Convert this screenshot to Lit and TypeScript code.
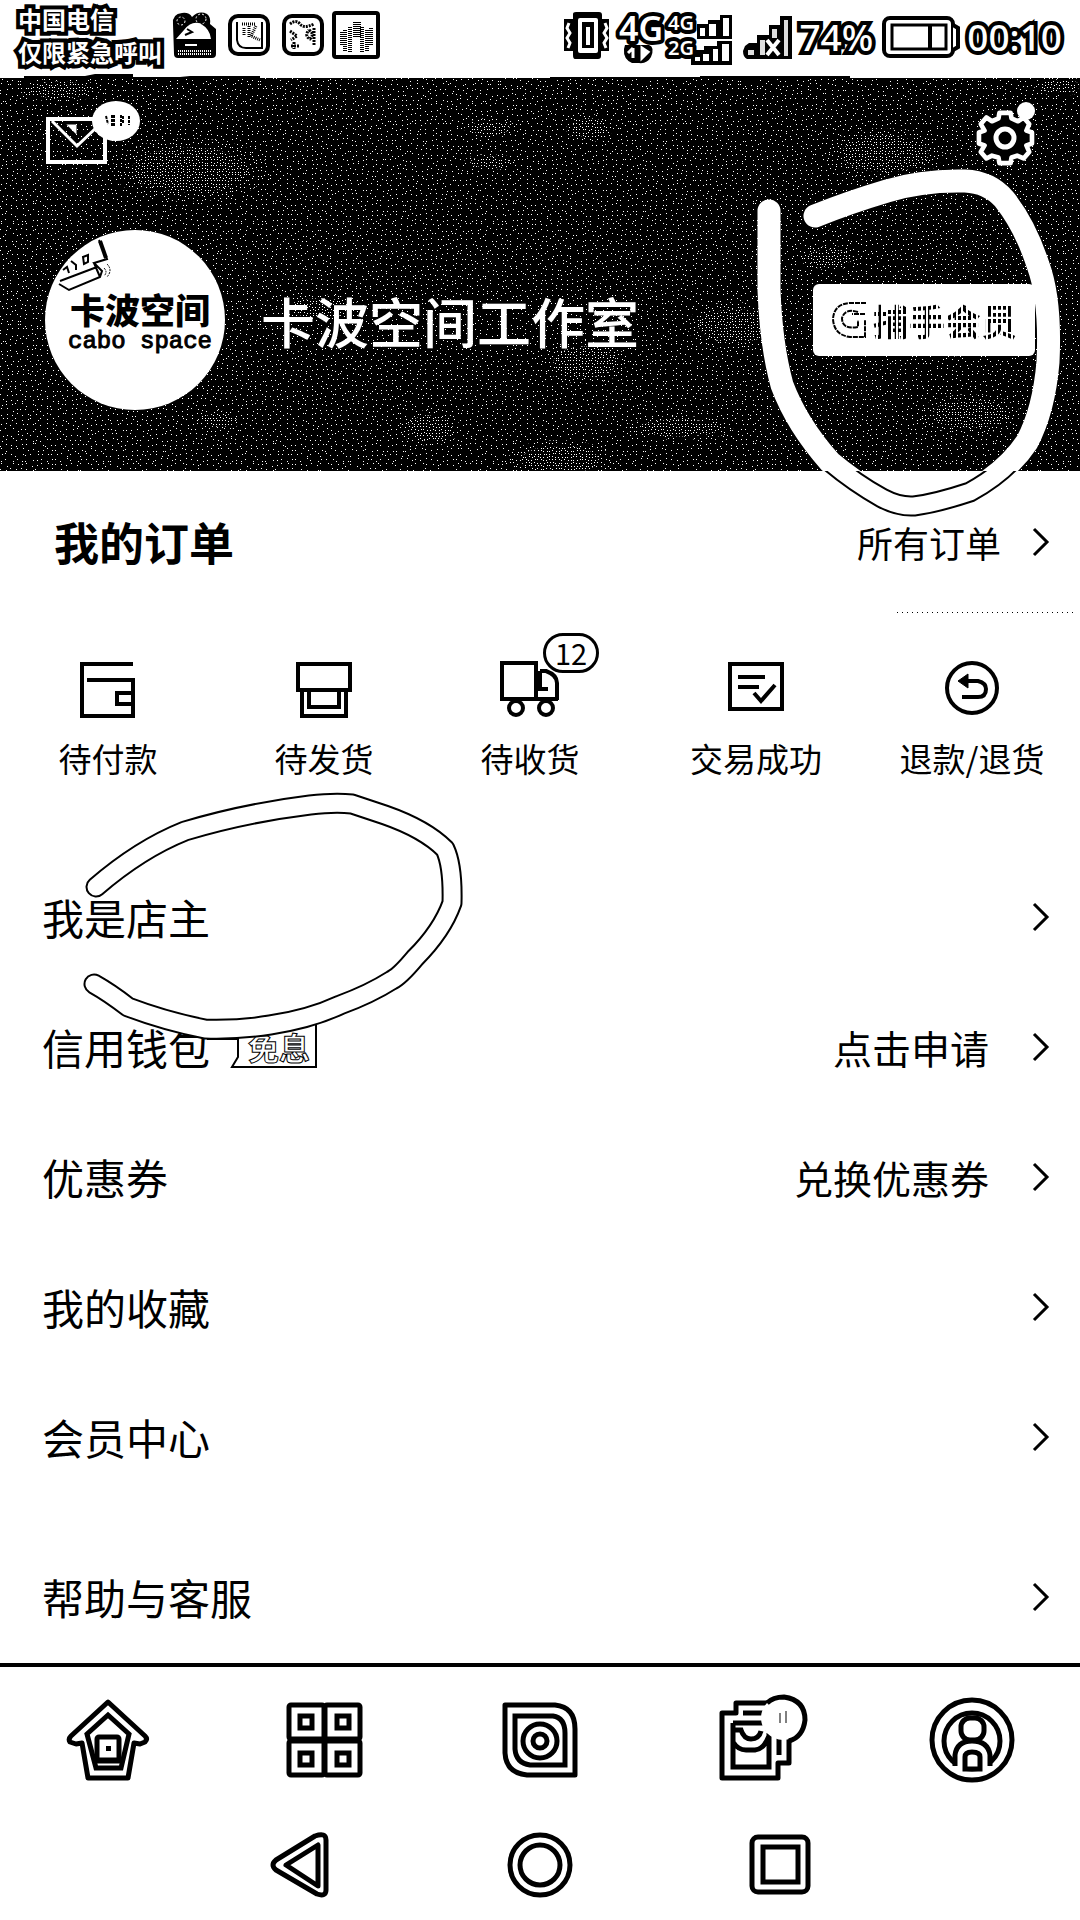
import { LitElement, html, css, svg, nothing } from "lit";
import { customElement } from "lit/decorators.js";

/* Builds a tile of single-pixel specks, one per cell, placed with a seeded generator. */
function speckles(size: number, cell: number, seed: number): string {
  let s = seed;
  const next = () => {
    s = (s * 1103515245 + 12345) % 2147483648;
    return s / 2147483648;
  };
  let d = "";
  for (let y = 0; y < size; y += cell) {
    for (let x = 0; x < size; x += cell) {
      const px = x + Math.floor(next() * (cell - 1));
      const py = y + Math.floor(next() * (cell - 1));
      d += `M${px} ${py}h1v1h-1z`;
    }
  }
  return d;
}

const BLOBS = [
  [190, 92, 78, 32], [490, 50, 26, 10], [490, 84, 26, 8], [590, 50, 24, 14], [885, 76, 58, 26],
  [735, 248, 48, 24], [585, 284, 42, 22], [430, 350, 30, 18], [560, 382, 52, 20],
  [975, 262, 52, 18], [830, 180, 30, 12], [220, 342, 22, 10], [680, 350, 54, 12],
  [970, 336, 50, 20], [1060, 8, 26, 10], [320, 230, 40, 14], [60, 12, 40, 12],
];

const chevron = html`<svg class="chev" viewBox="0 0 16 28" width="16" height="28" aria-hidden="true">
  <path d="M1 1L14 14L1 27" fill="none" stroke="#000" stroke-width="3" />
</svg>`;

const ORDERS = [
  { label: "待付款", icon: svg`<path d="M57 8H6V60H57V24H11M57 37H41V48H57" />` },
  { label: "待发货", icon: svg`<path d="M6 8H58V34H6zM10 36V60H54V36M17 36V51H47V36" />` },
  {
    label: "待收货", badge: "12",
    icon: svg`<path d="M4 7H38V43H4zM42 15H48Q59 19 59 27V44M42 15V33H50M38 43H60" /><circle cx="18" cy="52" r="7" /><circle cx="48" cy="52" r="7" />`,
  },
  { label: "交易成功", icon: svg`<path d="M6 8H58V53H6zM14 21H41M14 31H35M30 37L37 45L51 29" />` },
  {
    label: "退款/退货",
    icon: svg`<circle cx="32" cy="32" r="25" /><path d="M23 25H38Q46 27 46 33Q46 41 38 41H22" /><path d="M28 18L18 25L28 32z" fill="#000" stroke-width="1" />`,
  },
];

const ROWS = [
  { label: "我是店主" },
  { label: "信用钱包", tag: "免息", extra: "点击申请" },
  { label: "优惠券", extra: "兑换优惠券" },
  { label: "我的收藏" },
  { label: "会员中心" },
  { label: "帮助与客服", apart: true },
];

const TABS = [
  {
    label: "首页",
    icon: svg`<path d="M45 7L82 41Q85 44 82 47L77 49L71 48L65 83H25L19 48L13 49L7 47Q5 44 8 41z" stroke-linejoin="round" />
      <path d="M45 20L66 39L58 73H33L24 39z" /><rect x="34" y="42" width="22" height="23" rx="2" /><path d="M33 66H58" /><rect x="43" y="51" width="5" height="5" fill="#000" stroke="none" />`,
  },
  {
    label: "分类",
    icon: svg`<rect x="10" y="10" width="35" height="34" rx="2" /><rect x="46" y="10" width="35" height="34" rx="2" /><rect x="10" y="46" width="35" height="34" rx="2" /><rect x="46" y="46" width="35" height="34" rx="2" />
      <path d="M21 21H33V33H21zM58 21H70V33H58zM21 58H33V70H21zM58 58H70V70H58z" />`,
  },
  {
    label: "发现",
    icon: svg`<path d="M10 10H60Q80 12 80 34V80H32Q11 78 10 58z" stroke-linejoin="round" /><path d="M20 21H58Q70 23 70 38V70H35Q21 68 20 54z" /><circle cx="45" cy="46" r="17" /><circle cx="45" cy="46" r="7" />`,
  },
  {
    label: "购物袋",
    icon: svg`<g transform="translate(12 0)"><path d="M13 18V8H66V68H55V83H-1V18z" stroke-linejoin="round" /><path d="M20 18H46M56 42V60" /><path d="M10 28H45V36M46 38V72H10V28M10 35H18Q21 44 28 44Q36 44 38 36M10 47Q15 55 23 55H32Q41 54 46 41" />
      <circle cx="60" cy="23" r="22" fill="#fff" stroke="none" /><path d="M44 8Q50 2 61 2Q82 5 82 25Q80 42 66 46" /><path d="M57 18V28M63 16V28" stroke-width="1" /></g>`,
  },
  {
    label: "我的",
    icon: svg`<circle cx="45" cy="45" r="40" /><circle cx="45" cy="46" r="28" /><rect x="34" y="23" width="23" height="22" rx="9" fill="#fff" /><path d="M28 76V60Q28 46 45 46Q62 46 62 60V76z" fill="#fff" stroke="none" /><path d="M28 71V60Q30 46 45 46Q61 46 63 60V71" /><path d="M38 74V62Q38 57 45 57Q53 57 53 62V74z" />`,
  },
];

@customElement("app-root")
export class AppRoot extends LitElement {
  static styles = css`
    :host {
      display: block;
      background: #fff;
      color: #000;
      font-family: "Noto Sans CJK SC", "Noto Sans", sans-serif;
    }
    * { box-sizing: border-box; }
    svg { display: block; flex: none; overflow: visible; }
    button, a {
      font: inherit; color: inherit; background: none; border: 0; padding: 0; margin: 0;
      text-decoration: none; cursor: pointer;
    }
    .status {
      display: flex; justify-content: space-between; align-items: center;
      height: 78px; padding: 0 18px 4px;
    }
    .side { display: flex; align-items: center; gap: 8px; }
    .outlined {
      color: #fff; -webkit-text-stroke: 8px #000; paint-order: stroke fill;
      stroke-linejoin: round; font-weight: 500;
    }
    .carrier { font-size: 24px; line-height: 33px; font-weight: 700; margin-right: 2px; padding-bottom: 4px; }
    .level { font: 500 37px/40px "Noto Sans", sans-serif; }
    .net { margin: 0 3px 0 auto; }
    .net text {
      font-family: "Noto Sans", sans-serif; font-weight: 600; fill: #fff; stroke: #000;
      stroke-width: 8px; stroke-linejoin: round; paint-order: stroke fill;
    }
    .head { position: relative; background: #000; color: #fff; padding: 20px 45px 61px; }
    .texture { position: absolute; inset: 0; width: 100%; height: 100%; overflow: hidden; }
    .edge { position: absolute; left: 0; top: 0; }
    .tools { position: relative; display: flex; justify-content: space-between; margin-bottom: 62px; }
    .profile { position: relative; display: flex; align-items: center; }
    .avatar {
      width: 180px; height: 180px; border-radius: 50%; background: #fff; color: #000; overflow: hidden;
      position: relative; display: flex; flex-direction: column; align-items: center; justify-content: center;
      padding: 4px 0 0 10px;
    }
    .brush { position: absolute; left: 0; top: 0; }
    .studio { font-size: 35px; line-height: 40px; font-weight: 900; }
    .latin { font: 400 24px/26px "Liberation Mono", monospace; -webkit-text-stroke: 1px #000; }
    .name { font-size: 54px; line-height: 70px; font-weight: 500; margin: 2px auto 0 36px; }
    .member {
      display: flex; align-items: center; gap: 5px; width: 222px; height: 72px; padding-left: 19px;
      background: #fff; color: #000; border-radius: 6px;
    }
    .dots {
      font-size: 36px; line-height: 44px; font-weight: 700; color: transparent;
      background: repeating-linear-gradient(90deg, #000 0 3px, #fff 3px 5px);
      -webkit-background-clip: text; background-clip: text;
    }
    .ring { position: absolute; right: 0; top: 0; pointer-events: none; z-index: 2; }
    .ring.loop { right: auto; left: 0; top: -71px; }
    .title { display: flex; align-items: center; height: 144px; padding: 0 31px 3px 54px; }
    h2 { margin: 0 auto 0 0; font-size: 45px; line-height: 60px; font-weight: 700; }
    .all { display: flex; align-items: center; gap: 32px; font-size: 36px; line-height: 48px; }
    .rule {
      height: 1px; margin: -3px 4px 0 auto; width: 179px;
      background: repeating-linear-gradient(90deg, #000 0 1px, #fff 1px 5px);
    }
    .orders { display: grid; grid-template-columns: repeat(5, 1fr); padding: 43px 0 71px; }
    .order { display: flex; flex-direction: column; align-items: center; font-size: 33px; line-height: 46px; gap: 15px; }
    .order.shift { padding-right: 20px; }
    .glyph { position: relative; display: block; }
    .badge {
      position: absolute; left: 45px; top: -23px; width: 56px; height: 40px; border: 3px solid #000;
      border-radius: 20px; background: #fff; font-size: 29px; line-height: 32px; text-align: center;
    }
    .list { position: relative; }
    .row { display: flex; align-items: center; height: 130px; padding: 0 31px 0 42px; font-size: 42px; line-height: 56px; }
    .row.apart { margin-top: 30px; }
    .tag { margin: 2px 0 0 -3px; }
    .extra { font-size: 39px; margin-right: 44px; }
    .push { flex: 1; }
    .tabs { display: grid; grid-template-columns: repeat(5, 1fr); border-top: 4px solid #000; padding: 28px 0; margin-top: 1px; }
    .tab { display: flex; justify-content: center; }
    .keys { display: grid; grid-template-columns: repeat(3, 240px); justify-content: center; padding: 17px 0 19px; }
  `;

  private texture() {
    return html`<svg class="texture" aria-hidden="true">
      <defs>
        <pattern id="sparse" width="240" height="240" patternUnits="userSpaceOnUse"><path d=${speckles(240, 5, 7)} fill="#fff" /></pattern>
        <pattern id="mid" width="240" height="240" patternUnits="userSpaceOnUse"><rect width="240" height="240" /><path d=${speckles(240, 4, 11)} fill="#fff" /></pattern>
        <pattern id="dense" width="240" height="240" patternUnits="userSpaceOnUse"><rect width="240" height="240" /><path d=${speckles(240, 3, 19)} fill="#fff" /></pattern>
      </defs>
      <rect width="100%" height="100%" fill="url(#sparse)" shape-rendering="crispEdges" />
      ${BLOBS.map(([x, y, rx, ry]) => svg`<ellipse cx=${x} cy=${y} rx=${rx} ry=${ry} fill="url(#mid)" /><ellipse cx=${x} cy=${y} rx=${rx * 0.75} ry=${ry * 0.7} fill="url(#dense)" />`)}
    </svg>
    <svg class="edge" width="960" height="2" aria-hidden="true">
      <path d="M0 1V0H24V-2H85L95 -4H133V-1H180L190 -2H260V1zM550 1V-1H700V-2H850V0H960V1z" />
    </svg>`;
  }

  private statusBar() {
    return html`<div class="status">
      <div class="side">
        <div class="carrier outlined">中国电信<br />仅限紧急呼叫</div>
        <svg viewBox="0 0 210 50" width="210" height="50" aria-hidden="true">
          <path d="M1 12Q0 2 10 1Q17 0 20 5Q27 -2 35 2Q39 5 38 12L44 17V42Q44 46 40 46H6Q2 46 2 42z" />
          <circle cx="9" cy="9" r="4" fill="none" stroke="#fff" stroke-dasharray="2 2" /><circle cx="29" cy="7" r="5" fill="none" stroke="#fff" stroke-dasharray="2 2" />
          <path d="M4 27L12 18Q20 8 29 12Q38 17 39 27zM13 32H25V34H13z" fill="#fff" /><path d="M15 17L20 20L13 23" stroke="#000" stroke-width="2" fill="none" />
          <path d="M6 39H39M6 42H39" stroke="#fff" stroke-width="2" stroke-dasharray="1 1" />
          <rect x="58" y="4" width="38" height="38" rx="8" fill="#fff" stroke="#000" stroke-width="4" />
          <path d="M65 10V28Q66 36 74 36H90V10" fill="none" stroke="#000" stroke-width="2" /><path d="M70 12H83M72 16V24M77 14V26M84 14L79 24L88 28" stroke="#000" stroke-width="3" fill="none" stroke-dasharray="1 1" />
          <rect x="112" y="4" width="38" height="38" rx="8" fill="#fff" stroke="#000" stroke-width="4" />
          <path d="M118 12Q124 7 128 12T142 12M118 19L125 24L119 28M137 18Q143 22 138 27Q132 24 137 18M119 34H128M122 30V37M142 16V33" stroke="#000" stroke-width="3" fill="none" stroke-dasharray="2 1" />
          <rect x="162" y="1" width="44" height="44" rx="2" fill="#fff" stroke="#000" stroke-width="4" />
          <path d="M173 39V18M178 40V15M190 40V15M195 39V18M183 25V9M187 25V9M199 33V16M170 33V20" stroke="#000" stroke-width="4" stroke-dasharray="1 1" />
        </svg>
      </div>
      <svg class="net" viewBox="0 0 235 60" width="235" height="60" role="img" aria-label="4G 2G">
        <path d="M3 12H12V7Q12 5 15 5H38Q41 5 41 8V12H48V44H40V49Q40 52 37 52H14Q12 52 12 48V44H3z" />
        <rect x="17" y="11" width="20" height="35" rx="2" fill="#fff" /><rect x="21" y="15" width="12" height="26" /><rect x="25" y="20" width="4" height="18" fill="#fff" />
        <path d="M8 16L6 21L9 26L6 31L9 36L7 41M44 16L46 21L43 26L46 31L43 36L45 41" stroke="#fff" stroke-width="3" fill="none" />
        <path d="M64 38H88Q94 40 90 50Q86 57 78 56H71Q62 52 63 42z" />
        <text x="58" y="34" font-size="34">4G</text>
        <path d="M72 41V51M67 46L72 41M81 41V51L87 45z" stroke="#fff" stroke-width="3" fill="#fff" />
        <path d="M136 17H147V13H159V8H171V32H136zM130 43H143V39H156V34H171V58H130z" />
        <path d="M139 21h5v8h-5zM148 17h7v12h-7zM162 11h6v18h-6zM134 50h5v4h-5zM142 47h6v7h-6zM152 42h5v12h-5zM161 37h7v17h-7z" fill="#fff" />
        <text x="107" y="23" font-size="20">4G</text><text x="107" y="48" font-size="20">2G</text>
        <path d="M184 39L188 36H196V28H208V18H219V9H231V52H186Q182 50 182 44z" />
        <path d="M187 43h6v5h-6zM199 33h5v15h-5zM211 22h5v9h-5zM223 13h4v36h-4z" fill="#ddd" /><path d="M206 33L218 48M218 33L206 48" stroke="#fff" stroke-width="4" />
      </svg>
      <div class="side">
        <span class="level outlined">74%</span>
        <svg viewBox="0 0 78 44" width="78" height="44" aria-hidden="true">
          <rect x="3" y="3" width="69" height="38" rx="6" fill="#fff" stroke="#000" stroke-width="4" /><path d="M72 10L77 13V32L72 35" fill="#fff" stroke="#000" stroke-width="4" />
          <rect x="11" y="10" width="54" height="24" fill="#fff" stroke="#000" stroke-width="3" /><path d="M49 10V34" stroke="#000" stroke-width="4" />
        </svg>
        <span class="level outlined">00:10</span>
      </div>
    </div>`;
  }

  private header() {
    const ring = "M27 111V190Q29 245 40 285Q55 325 88 362Q113 383 140 398Q157 407 172 406Q195 403 228 392Q265 372 285 342Q302 310 306 262Q309 200 296 165Q283 125 262 99Q247 82 223 81Q180 80 145 91Q108 102 73 116";
    return html`<header class="head">
      ${this.texture()}
      <div class="tools">
        <button aria-label="消息"><svg viewBox="45 98 96 70" width="96" height="70">
          <rect x="48" y="119" width="57" height="43" fill="none" stroke="#fff" stroke-width="4" />
          <path d="M52 121L77 146L97 127M70 126L75 131V126z" fill="none" stroke="#fff" stroke-width="3" />
          <ellipse cx="116" cy="121" rx="24" ry="20" fill="#fff" />
          <path d="M106 116L108 124M112 115V126M114 115V126M121 115V126M123 116V124M129 116V125" stroke="#000" stroke-width="2" stroke-dasharray="3 1" />
        </svg></button>
        <button aria-label="设置"><svg viewBox="975 98 60 70" width="60" height="70">
          <path d="M998 117L999 111H1011L1012 117L1019 120L1025 116L1031 123L1028 130L1034 132V144L1028 146L1031 153L1025 160L1018 157L1012 159L1011 165H999L998 159L991 157L985 160L979 153L983 146L977 144V132L983 130L979 123L985 116L991 120z" fill="#000" stroke="#fff" stroke-width="5" stroke-linejoin="round" transform="translate(1005 138) scale(.93) translate(-1005 -138)" />
          <circle cx="1005" cy="138" r="9" fill="none" stroke="#fff" stroke-width="5" /><circle cx="1026" cy="111" r="9" fill="#fff" />
        </svg></button>
      </div>
      <div class="profile">
        <div class="avatar">
          <svg class="brush" viewBox="0 0 180 180" width="180" height="180" aria-hidden="true">
            <path d="M54 10L62 29L49 33L57 41L55 47L24 60L14 54M49 33L55 47M15 51L52 37" fill="none" stroke="#000" stroke-width="2" /><path d="M55 11L61 28" stroke="#000" stroke-width="4" /><path d="M38 27L43 25V32L39 34zM26 31L31 35V40M18 40L22 37L24 43" stroke="#000" stroke-width="2" fill="none" /><path d="M62 34Q68 40 62 47M59 38Q63 42 59 46" stroke="#000" fill="none" stroke-dasharray="2 1" />
          </svg>
          <span class="studio">卡波空间</span><span class="latin">cabo space</span>
        </div>
        <div class="name">卡波空间工作室</div>
        <button class="member">
          <svg viewBox="0 0 36 40" width="36" height="40" aria-hidden="true"><path d="M34 3H18Q2 4 1 19Q2 35 18 37H33V20M33 14H20M26 12Q13 8 10 18Q10 30 26 27V20" fill="none" stroke="#000" stroke-width="2" stroke-dasharray="5 1" /></svg>
          <span class="dots">捕手会员</span>
        </button>
      </div>
      <svg class="ring" viewBox="0 0 338 440" width="338" height="440" aria-hidden="true">
        <defs><clipPath id="upper"><rect x="0" y="0" width="338" height="393" /></clipPath></defs>
        <g transform="translate(0 22)" fill="none" stroke-linecap="round" stroke-linejoin="round">
          <path d=${ring} transform="translate(0 0)" stroke="#000" stroke-width="21" />
          <path d=${ring} stroke="#fff" stroke-width="17" />
        </g>
        <g clip-path="url(#upper)"><path d=${ring} transform="translate(0 22)" fill="none" stroke="#fff" stroke-width="23" stroke-linecap="round" /></g>
      </svg>
    </header>`;
  }

  render() {
    return html`
      ${this.statusBar()} ${this.header()}
      <main>
        <div class="title"><h2>我的订单</h2><a class="all" href="#orders">所有订单${chevron}</a></div>
        <div class="rule"></div>
        <nav class="orders">
          ${ORDERS.map((o) => html`<a class="order ${o.badge ? "shift" : ""}" href="#order">
            <span class="glyph"><svg viewBox="0 0 64 64" width="64" height="64" fill="none" stroke="#000" stroke-width="4">${o.icon}</svg>${o.badge ? html`<span class="badge">${o.badge}</span>` : nothing}</span>
            <span>${o.label}</span></a>`)}
        </nav>
        <div class="list">
          ${ROWS.map((r) => html`<a class="row ${r.apart ? "apart" : ""}" href="#row">
            <span>${r.label}</span>
            ${r.tag ? html`<svg class="tag" viewBox="0 0 112 46" width="112" height="46">
              <path d="M0 14H31V32L25 42H109V0" fill="none" stroke="#000" stroke-width="2" />
              <text x="41" y="35" font-size="31" font-weight="700" fill="#fff" stroke="#000" stroke-width="1">${r.tag}</text></svg>` : nothing}
            <span class="push"></span>
            ${r.extra ? html`<span class="extra">${r.extra}</span>` : nothing}${chevron}</a>`)}
          <svg class="ring loop" viewBox="0 780 480 270" width="480" height="270" aria-hidden="true">
            ${[["#000", 21], ["#fff", 17]].map(([c, w]) => svg`<path d="M96 886Q140 848 185 830Q245 812 310 804Q335 801 352 803L385 814Q425 828 445 848Q453 865 452 902Q442 930 415 957Q400 975 392 979Q370 993 340 1004Q310 1018 270 1024Q240 1029 205 1028Q165 1020 128 1006Q110 992 94 983" fill="none" stroke=${c} stroke-width=${w} stroke-linecap="round" stroke-linejoin="round" />`)}
          </svg>
        </div>
      </main>
      <nav class="tabs">
        ${TABS.map((t) => html`<button class="tab" aria-label=${t.label}><svg viewBox="0 0 90 90" width="90" height="90" fill="none" stroke="#000" stroke-width="5">${t.icon}</svg></button>`)}
      </nav>
      <nav class="keys">
        <button class="tab" aria-label="返回"><svg viewBox="0 0 70 70" width="70" height="70" fill="none" stroke="#000" stroke-width="5" stroke-linejoin="round"><path d="M50 6Q61 2 61 10V60Q61 67 52 64L11 40Q5 35 11 30zM53 15V56L21 35z" /></svg></button>
        <button class="tab" aria-label="主屏幕"><svg viewBox="0 0 70 70" width="70" height="70" fill="none" stroke="#000" stroke-width="5"><circle cx="35" cy="35" r="30" /><circle cx="35" cy="35" r="20" /></svg></button>
        <button class="tab" aria-label="最近任务"><svg viewBox="0 0 70 70" width="70" height="70" fill="none" stroke="#000" stroke-width="5"><rect x="7" y="7" width="56" height="55" rx="6" /><rect x="18" y="17" width="35" height="35" /></svg></button>
      </nav>`;
  }
}
